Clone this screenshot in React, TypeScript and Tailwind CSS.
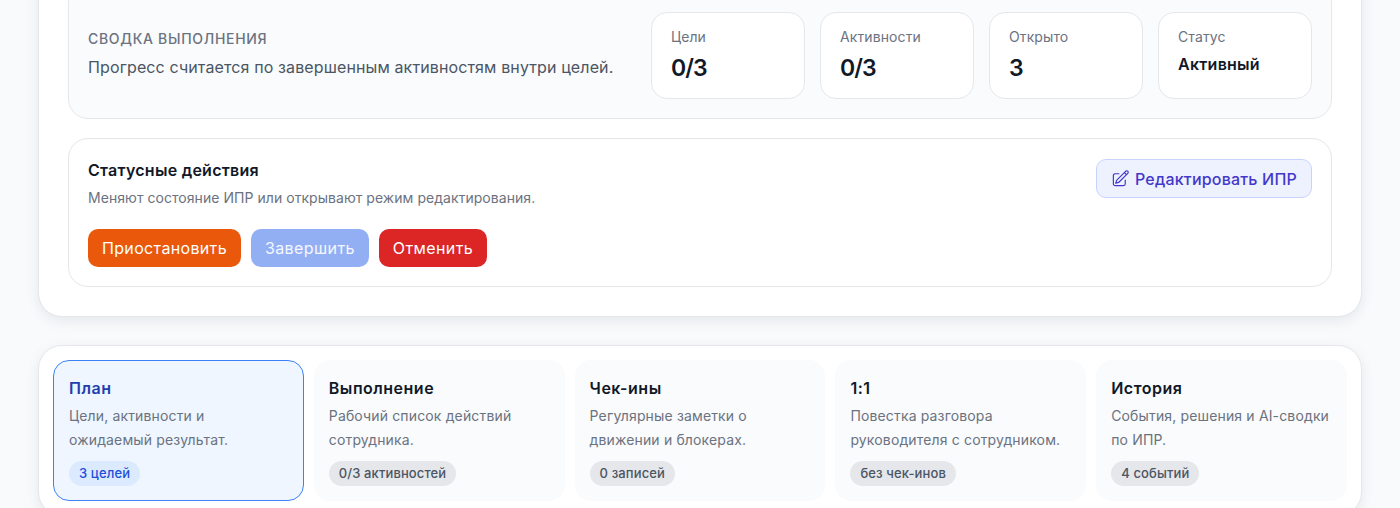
import { HiOutlinePencilSquare } from "react-icons/hi2";

const stats = [
  { label: "Цели", value: "0/3", big: true },
  { label: "Активности", value: "0/3", big: true },
  { label: "Открыто", value: "3", big: true },
  { label: "Статус", value: "Активный", big: false },
];

const tabs = [
  { title: "План", l1: "Цели, активности и", l2: "ожидаемый результат.", badge: "3 целей", active: true },
  { title: "Выполнение", l1: "Рабочий список действий", l2: "сотрудника.", badge: "0/3 активностей", active: false },
  { title: "Чек-ины", l1: "Регулярные заметки о", l2: "движении и блокерах.", badge: "0 записей", active: false },
  { title: "1:1", l1: "Повестка разговора", l2: "руководителя с сотрудником.", badge: "без чек-инов", active: false },
  { title: "История", l1: "События, решения и AI-сводки", l2: "по ИПР.", badge: "4 событий", active: false },
];

export default function App() {
  return (
    <div className="h-[508px] overflow-hidden bg-[#f8fafc] font-['Inter',sans-serif]">
      <div className="mx-[38px] -mt-[40px] flex flex-col gap-[28px]">
        <div className="flex flex-col gap-[19px] rounded-[24px] border border-[#e5e7eb] bg-white px-[29px] pb-[29px] pt-[20px] shadow-[0_4px_14px_rgba(15,23,42,0.08)]">
          <div className="flex h-[138px] items-end justify-between rounded-[20px] border border-[#e5e7eb] bg-[#f9fbfd] pb-[19px] pl-[19px] pr-[19px] pt-[32px]">
            <div className="mb-[22px]">
              <div className="text-[14px] font-medium uppercase leading-[20px] tracking-[0.05em] text-[#6b7280]">Сводка выполнения</div>
              <div className="mt-[8px] text-[16px] leading-[20px] tracking-[0.12px] text-[#4b5563]">Прогресс считается по завершенным активностям внутри целей.</div>
            </div>
            <div className="flex gap-[15px]">
              {stats.map((s) => (
                <div key={s.label} className="h-[87px] w-[154px] rounded-[16px] border border-[#e5e7eb] bg-white px-[19px] pt-[14px]">
                  <div className="text-[14px] leading-[20px] tracking-[0.1px] text-[#6b7280]">{s.label}</div>
                  {s.big ? (
                    <div className="mt-[6px] text-[23px] font-semibold leading-[30px] tracking-[-0.9px] text-[#111827]">{s.value}</div>
                  ) : (
                    <div className="mt-[5px] text-[16px] font-semibold leading-[24px] tracking-[0.25px] text-[#111827]">{s.value}</div>
                  )}
                </div>
              ))}
            </div>
          </div>
          <div className="flex items-start justify-between rounded-[20px] border border-[#e5e7eb] bg-white p-[19px]">
            <div>
              <div className="text-[16px] font-semibold leading-[24px] tracking-[0.25px] text-[#111827]">Статусные действия</div>
              <div className="mt-[6px] text-[14px] leading-[20px] tracking-[0.05px] text-[#6b7280]">Меняют состояние ИПР или открывают режим редактирования.</div>
              <div className="mt-[21px] flex gap-[10px]">
                <button className="h-[38px] rounded-[10px] bg-[#ea580c] px-[14px] text-[16px] font-normal tracking-[0.34px] text-white">Приостановить</button>
                <button className="h-[38px] rounded-[10px] bg-[#93aff3] px-[14px] text-[16px] font-normal tracking-[0.4px] text-white/90">Завершить</button>
                <button className="h-[38px] rounded-[10px] bg-[#dc2626] px-[14px] text-[16px] font-normal tracking-[0.4px] text-white">Отменить</button>
              </div>
            </div>
            <button className="mt-px flex h-[39px] items-center gap-[5px] rounded-[10px] border border-[#c7d2fe] bg-[#eef2ff] pl-[14px] pr-[14px] text-[16px] font-medium tracking-[0.2px] text-[#4338ca]">
              <HiOutlinePencilSquare size={19} />
              Редактировать ИПР
            </button>
          </div>
        </div>
        <div className="rounded-[24px] border border-[#e5e7eb] bg-white p-[14px] shadow-[0_4px_14px_rgba(15,23,42,0.08)]">
          <div className="grid grid-cols-5 gap-[10px]">
            {tabs.map((t) => (
              <div
                key={t.title}
                className={
                  t.active
                    ? "h-[141px] rounded-[16px] border border-[#3b82f6] bg-[#eff6ff] px-[15px] pt-[15px]"
                    : "h-[141px] rounded-[16px] border border-[#f9fbfd] bg-[#f9fbfd] px-[14px] pt-[15px]"
                }
              >
                <div className={t.active ? "text-[16px] font-semibold leading-[24px] tracking-[0.5px] text-[#1e40af]" : "text-[16px] font-semibold leading-[24px] tracking-[0.5px] text-[#111827]"}>{t.title}</div>
                <div className="mt-[4px] text-[14px] leading-[24px] tracking-[0.15px] text-[#6b7280]">
                  <div>{t.l1}</div>
                  <div>{t.l2}</div>
                </div>
                <div className={t.active ? "mt-[9px] inline-block rounded-full bg-[#dbeafe] px-[10px] text-[13px] font-medium leading-[25px] tracking-[0.12px] text-[#1d4ed8]" : "mt-[9px] inline-block rounded-full bg-[#e5e7eb] px-[10px] text-[13px] font-medium leading-[25px] tracking-[0.12px] text-[#4b5563]"}>{t.badge}</div>
              </div>
            ))}
          </div>
        </div>
      </div>
    </div>
  );
}
